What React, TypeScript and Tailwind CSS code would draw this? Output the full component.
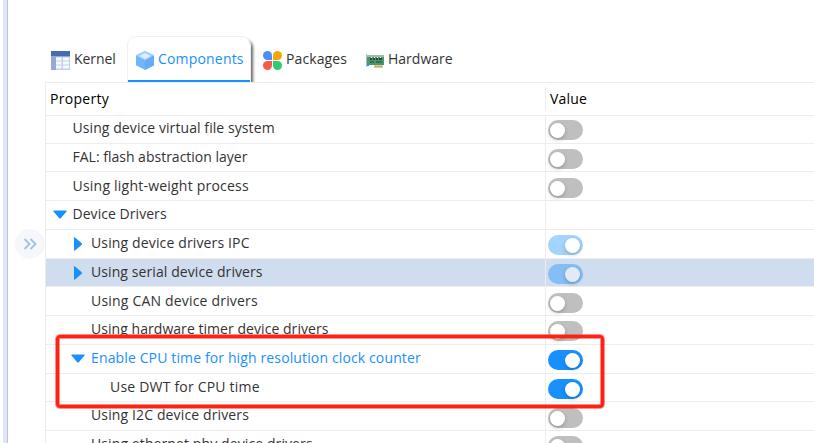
import React from "react";

type Toggle = "off" | "on" | "dim" | "none";

interface Row {
  label: string;
  // row height including its bottom rule, and the offset of its content
  height: string;
  pad: string;
  indent: string;
  spacing: string;
  arrow?: "down" | "right";
  toggle: Toggle;
  selected?: boolean;
  hot?: boolean;
}

const rows: Row[] = [
  { label: "Using device virtual file system", height: "h-[28px]", pad: "pt-[4px]", indent: "pl-[26.5px]", spacing: "tracking-[0.08px]", toggle: "off" },
  { label: "FAL: flash abstraction layer", height: "h-[28px]", pad: "pt-[5px]", indent: "pl-[26.5px]", spacing: "tracking-[0px]", toggle: "off" },
  { label: "Using light-weight process", height: "h-[29px]", pad: "pt-[6px]", indent: "pl-[26.5px]", spacing: "tracking-[0.22px]", toggle: "off" },
  { label: "Device Drivers", height: "h-[29px]", pad: "pt-[5px]", indent: "pl-[26.5px]", spacing: "tracking-[0.05px]", arrow: "down", toggle: "none" },
  { label: "Using device drivers IPC", height: "h-[29px]", pad: "pt-[5px]", indent: "pl-[45px]", spacing: "tracking-[0.14px]", arrow: "right", toggle: "dim" },
  { label: "Using serial device drivers", height: "h-[28px]", pad: "pt-[5px]", indent: "pl-[45px]", spacing: "tracking-[0.09px]", arrow: "right", toggle: "dim", selected: true },
  { label: "Using CAN device drivers", height: "h-[29px]", pad: "pt-[6px]", indent: "pl-[45px]", spacing: "tracking-[0.19px]", toggle: "off" },
  { label: "Using hardware timer device drivers", height: "h-[29px]", pad: "pt-[5px]", indent: "pl-[45px]", spacing: "tracking-[0.05px]", toggle: "off" },
  { label: "Enable CPU time for high resolution clock counter", height: "h-[29px]", pad: "pt-[5px]", indent: "pl-[45px]", spacing: "tracking-[0.13px]", arrow: "down", toggle: "on", hot: true },
  { label: "Use DWT for CPU time", height: "h-[28px]", pad: "pt-[5px]", indent: "pl-[64px]", spacing: "tracking-[0.2px]", toggle: "on" },
  { label: "Using I2C device drivers", height: "h-[29px]", pad: "pt-[6px]", indent: "pl-[45px]", spacing: "tracking-[0.13px]", toggle: "off" },
  { label: "Using ethernet phy device drivers", height: "h-[29px]", pad: "pt-[5px]", indent: "pl-[45px]", spacing: "tracking-[0.1px]", toggle: "off" },
];

function Switch({ kind, selected }: { kind: Toggle; selected?: boolean }) {
  if (kind === "none") return null;
  const track = kind === "off" ? "bg-[#bfbfbf]" : kind === "on" ? "bg-[#1890ff]" : selected ? "bg-[#84bef5]" : "bg-[#a3d3ff]";
  const knob = selected ? "bg-[#e2eaf6]" : "bg-white";
  return (
    <span className={`flex h-[20px] w-[35px] items-center rounded-full px-[2px] pt-px ${track} ${kind === "off" ? "justify-start" : "justify-end pr-[3px]"}`}>
      <span className={`size-[15px] rounded-full shadow-[0_2px_4px_rgba(0,35,11,0.22)] ${knob}`} />
    </span>
  );
}

function Arrow({ dir }: { dir: "down" | "right" }) {
  return dir === "down" ? (
    <svg className="ml-auto mr-[6px] mt-[4px] h-[9px] w-[14px]" viewBox="0 0 14 9">
      <path d="M1 .5h12q1.300 0 .5 1L8 8q-1 1-2 0L.5 1.500Q-.3.500 1 .500z" fill="#1890ff" />
    </svg>
  ) : (
    <svg className="ml-auto mr-[9px] mt-[2px] h-[14px] w-[8px]" viewBox="0 0 8 14">
      <path d="M0 .8Q0-.4 1 .5l6.500 5.500q1 1 0 2L1 13.500q-1 .8-1-.4z" fill="#1890ff" />
    </svg>
  );
}

function KernelIcon() {
  return (
    <svg className="mt-[15px] h-[19px] w-[19px]" viewBox="0 0 19 19">
      <rect width="19" height="19" fill="#94abd4" />
      <rect width="19" height="5" fill="#496cb0" />
      <path d="M5 6h14v13H5z" fill="#c3d0e8" />
      <path d="M5 6.500h5.500v3H5zM12 6.500h6v3h-6zM5 10.500h5.500v3H5zM12 10.500h6v3h-6zM5 14.500h5.500v3H5zM12 14.500h6v3h-6z" fill="#f6f9fd" />
    </svg>
  );
}

function CubeIcon() {
  return (
    <svg className="mt-[15px] h-[19px] w-[18px]" viewBox="0 0 18 19">
      <path d="M9 0l9 4.300v10L9 19l-9-4.700v-10z" fill="#72b6ff" />
      <path d="M9 0l9 4.600-9 5-9-5z" fill="#a0d0ff" />
      <path d="M9 2l5.500 3L9 8 3.500 5z" fill="#deefff" />
      <path d="M9 9.600l9-5v9.700L9 19z" fill="#65acfb" />
    </svg>
  );
}

function PackagesIcon() {
  return (
    <svg className="mt-[15px] h-[19px] w-[19px]" viewBox="0 0 19 19">
      <path d="M4.500 0A4.500 4.500 0 0 1 9 4.500V9H4.500a4.500 4.500 0 0 1 0-9z" fill="#4a90fb" />
      <path d="M14.500 0a4.500 4.500 0 0 1 0 9H10V4.500A4.500 4.500 0 0 1 14.500 0z" fill="#f5a706" />
      <path d="M4.500 10H9v4.500A4.500 4.500 0 1 1 4.500 10z" fill="#f75a4b" />
      <path d="M10 10h4.500a4.500 4.500 0 1 1-4.500 4.500z" fill="#2bcd75" />
    </svg>
  );
}

function BoardIcon() {
  return (
    <svg className="mt-[18px] h-[15px] w-[18px]" viewBox="0 0 18 15">
      <path d="M0 0h1v13H0z" fill="#b8bfc3" />
      <path d="M1 1h17v10H1z" fill="#4b9670" />
      <path d="M1 1h17v2H1z" fill="#9dbfa9" />
      <path d="M4 4h2v2H4zM7 4h2v2H7zM10 4h2v2h-2zM13 4h3v2h-3z" fill="#2d4535" />
      <path d="M5 3h1v1H5zM8 3h1v1H8zM11 3h1v1h-1zM14 3h1v1h-1z" fill="#f0f6f1" />
      <path d="M4 7h4v2H4zM10 7h6v2h-6z" fill="#287a4e" />
      <path d="M1 9h2v3H1z" fill="#2196ee" />
      <path d="M8 11h9v3H8z" fill="#dccb9f" />
      <path d="M9 12h7v1H9z" fill="#c2a76c" />
    </svg>
  );
}

export default function App() {
  return (
    <div className="relative flex h-[443px] w-[814px] overflow-hidden bg-white font-['Open_Sans',sans-serif] text-[14px] leading-[20px] text-[#333]">
      <div className="w-[8px] shrink-0 border-r border-[#bcc3d1] bg-[linear-gradient(to_right,#fff_3px,#dfe5f4_3px)]" />

      <aside className="flex w-[38px] shrink-0 pl-[7px] pt-[229px]">
        <div className="flex size-[30px] items-center justify-center rounded-full bg-[#f5f7fa]">
          <svg className="size-[14px]" viewBox="0 0 14 14" fill="none" stroke="#a6c2df" strokeWidth="2">
            <path d="M1.500 2l5 5-5 5M7.500 2l5 5-5 5" />
          </svg>
        </div>
      </aside>

      <main className="flex min-w-0 flex-1 flex-col">
        <nav className="flex h-[82px] shrink-0 pt-[36px] whitespace-nowrap">
          <div className="flex w-[82px] pl-[5px]">
            <KernelIcon />
            <span className="ml-[4px] mt-[13px] tracking-[-0.05px]">Kernel</span>
          </div>
          <div className="mt-px flex w-[122px] rounded-t-[8px] border-b-2 border-[#1890ff] pl-[8px] text-[#1890ff] shadow-[0_0_0_1px_#f0f0f0,3px_3px_3px_#666] [clip-path:inset(-2px_-6px_0_-1px)]">
            <div className="-mt-px flex">
              <CubeIcon />
              <span className="ml-[4px] mt-[13px] tracking-[0.18px]">Components</span>
            </div>
          </div>
          <div className="flex w-[104px] pl-[13px]">
            <PackagesIcon />
            <span className="ml-[4px] mt-[13px] tracking-[0.1px]">Packages</span>
          </div>
          <div className="flex pl-[12px]">
            <BoardIcon />
            <span className="ml-[4px] mt-[13px] tracking-[0px]">Hardware</span>
          </div>
        </nav>

        <section className="-ml-px flex flex-col border-l border-[#ededed] whitespace-nowrap">
          <header className="flex h-[34px] border-y border-[#ededed] text-black">
            <div className="w-[499px] pl-[4px] pt-[6px]"><span className="tracking-[0.28px]">Property</span></div>
            <div className="mb-1 mt-1 border-l border-[#ededed] pl-[4px] pt-[2px]"><span className="tracking-[0.2px]">Value</span></div>
          </header>
          {rows.map((r) => (
            <div key={r.label} className={`flex shrink-0 border-b border-[#ededed] ${r.height} ${r.selected ? "bg-[#cfddee]" : ""}`}>
              <div className={`flex w-[499px] ${r.pad} ${r.indent}`}>
                {r.arrow && (
                  <span className="-ml-[26px] flex w-[26px] shrink-0">
                    <Arrow dir={r.arrow} />
                  </span>
                )}
                <span className={`${r.label.includes("I2C") ? "-mt-[3px]" : "-mt-[2px]"} ${r.spacing} ${r.hot ? "text-[#1890ff]" : ""}`}>{r.label}</span>
              </div>
              <div className={`flex flex-1 border-l border-[#ededed] pl-[2px] ${r.pad}`}>
                <Switch kind={r.toggle} selected={r.selected} />
              </div>
            </div>
          ))}
        </section>
      </main>

      <div className="absolute left-[56px] top-[335px] h-[73px] w-[548px] rounded-[4px] border-3 border-[#ff2111] shadow-[0_0_0_1px_rgba(255,33,17,0.5),inset_0_0_0_1px_rgba(255,33,17,0.5)]" />
    </div>
  );
}
